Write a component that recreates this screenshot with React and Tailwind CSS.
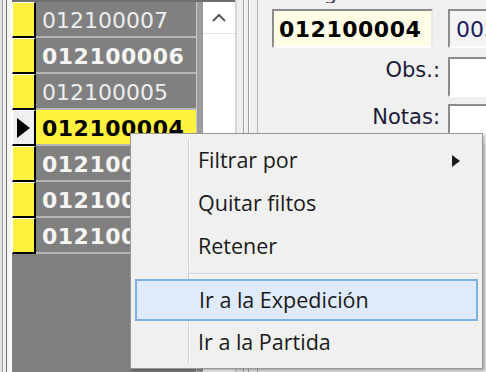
export default function App() {
  const rows = [
    { code: '012100007', bold: false },
    { code: '012100006', bold: true },
    { code: '012100005', bold: false },
    { code: '012100004', bold: true, current: true },
    { code: '012100003', bold: true },
    { code: '012100002', bold: true },
    { code: '012100001', bold: true },
  ];
  const sunken =
    'border-2 border-t-[#8c8c8c] border-l-[#8c8c8c] border-b-[#ffffff] border-r-[#e8e8e8]';
  return (
    <div className="relative w-[486px] h-[372px] overflow-hidden bg-[#f0f0f0] flex font-['DejaVu_Sans',sans-serif]">
      {/* left frame lines */}
      <div className="flex h-full w-[12px] shrink-0">
        <div className="w-[2px] bg-[#e3e3e3]" />
        <div className="w-px bg-[#a0a0a0]" />
        <div className="w-[3px] bg-[#f0f0f0]" />
        <div className="w-px bg-[#6e6e6e]" />
        <div className="w-[4px] bg-[#f6f6f6]" />
        <div className="w-px bg-[#ffffff]" />
      </div>

      {/* grid + scrollbar */}
      <div className="flex flex-col w-[223px] shrink-0 h-full">
        <div className="h-[2px] bg-[#6e6e6e]" />
        <div className="flex flex-1">
          <div className="flex flex-col w-[184px] bg-[#808080]">
            {rows.map((r) => (
              <div key={r.code} className="flex h-[36px]">
                <div
                  className={`w-[24px] h-full border-t border-l border-t-white border-l-white border-r-2 border-b-2 border-r-black border-b-black flex items-center ${
                    r.current ? 'bg-[#f0f0f0]' : 'bg-[#fff23e]'
                  }`}
                >
                  {r.current && (
                    <svg width="14" height="20" viewBox="0 0 14 20" className="ml-[4px]">
                      <polygon points="0,0 13,10 0,20" fill="#000" />
                    </svg>
                  )}
                </div>
                <div
                  className={`w-[160px] h-full border-b-2 border-b-[#b6b6b6] flex items-center pl-[6px] pt-[3px] text-[22px] leading-[26px] ${
                    r.current
                      ? 'bg-[#fff23e] text-black font-bold tracking-[0.5px]'
                      : r.bold
                      ? 'bg-[#808080] text-[#f4f4f4] font-bold tracking-[0.5px]'
                      : 'bg-[#808080] text-[#ededed]'
                  }`}
                >
                  {r.code}
                </div>
              </div>
            ))}
          </div>
          <div className="w-px bg-[#c8c8c8]" />
          <div className="w-[6px] bg-[#9c9c9c]" />
          <div className="w-[32px] bg-white flex flex-col">
            <div className="h-[32px] border-b border-b-[#e2e2e2] flex items-center justify-center">
              <svg width="16" height="10" viewBox="0 0 16 10">
                <polyline points="2,8 8,2 14,8" fill="none" stroke="#5a5a5a" strokeWidth="2" />
              </svg>
            </div>
          </div>
        </div>
      </div>

      {/* separator lines */}
      <div className="flex h-full w-[23px] shrink-0">
        <div className="w-[2px] bg-[#d6d6d6]" />
        <div className="w-[6px] bg-[#f0f0f0]" />
        <div className="w-px bg-[#a0a0a0]" />
        <div className="w-px bg-white" />
        <div className="w-[3px] bg-[#f0f0f0]" />
        <div className="w-px bg-[#a0a0a0]" />
        <div className="w-px bg-white" />
        <div className="w-[7px] bg-[#f0f0f0]" />
        <div className="w-px bg-[#b4b4b4]" />
      </div>

      {/* right panel */}
      <div className="flex flex-col w-[300px] shrink-0 text-[#1c1c38]">
        <div className="h-[3px] overflow-hidden flex text-[21px] leading-[26px] text-[#3a3a50]">
          <div className="ml-[19px] -mt-[20px]">Código</div>
          <div className="ml-[116px] -mt-[20px]">Línea</div>
        </div>
        <div className="flex mt-[6px]">
          <div
            className={`ml-[14px] w-[161px] h-[39px] bg-[#fffde6] ${sunken} flex items-center pl-[5px] pt-[2px] text-[22px] font-bold tracking-[0.5px] text-black`}
          >
            012100004
          </div>
          <div
            className={`ml-[15px] w-[100px] h-[39px] bg-[#f4f4f4] ${sunken} flex items-center pl-[6px] pt-[2px] text-[22px] text-[#1a2060]`}
          >
            003
          </div>
        </div>
        <div className="flex mt-[9px] items-start">
          <div className="w-[182px] text-right text-[21px] leading-[26px]">Obs.:</div>
          <div className={`ml-[8px] w-[80px] h-[40px] bg-white ${sunken}`} />
        </div>
        <div className="flex mt-[7px] items-start">
          <div className="w-[182px] text-right text-[21px] leading-[26px]">Notas:</div>
          <div className={`ml-[8px] w-[80px] h-[40px] bg-white ${sunken}`} />
        </div>
      </div>

      {/* context menu */}
      <div className="absolute left-[130px] top-[133px] w-[353px] h-[236px] bg-[#f0f0f0] border border-[#979797] shadow-[2px_2px_3px_rgba(0,0,0,0.3)] flex flex-col pt-[5px] font-['Open_Sans',sans-serif] text-[21.5px] text-[#1a1a1a]">
        {['Filtrar por', 'Quitar filtos', 'Retener'].map((t, i) => (
          <div key={t} className="flex h-[43px] items-stretch">
            <div className="w-[58px] border-r border-r-[#d2d2d2]" />
            <div className="w-px bg-white" />
            <div className="flex-1 flex items-center pl-[8px]">{t}</div>
            {i === 0 && (
              <div className="flex items-center mr-[22px]">
                <svg width="8" height="12" viewBox="0 0 8 12">
                  <polygon points="0,0 8,6 0,12" fill="#1a1a1a" />
                </svg>
              </div>
            )}
          </div>
        ))}
        <div className="flex h-[11px]">
          <div className="w-[58px] border-r border-r-[#d2d2d2]" />
          <div className="flex-1 flex flex-col pt-[5px] mr-[4px]">
            <div className="h-px bg-[#d2d2d2]" />
            <div className="h-px bg-white" />
          </div>
        </div>
        <div className="mx-[4px] h-[42px] border-2 border-[#7db2e6] bg-[#dfeafa] flex items-center pl-[62px]">
          Ir a la Expedición
        </div>
        <div className="flex h-[43px] items-stretch">
          <div className="w-[58px] border-r border-r-[#d2d2d2]" />
          <div className="w-px bg-white" />
          <div className="flex-1 flex items-center pl-[8px]">Ir a la Partida</div>
        </div>
      </div>
    </div>
  );
}
